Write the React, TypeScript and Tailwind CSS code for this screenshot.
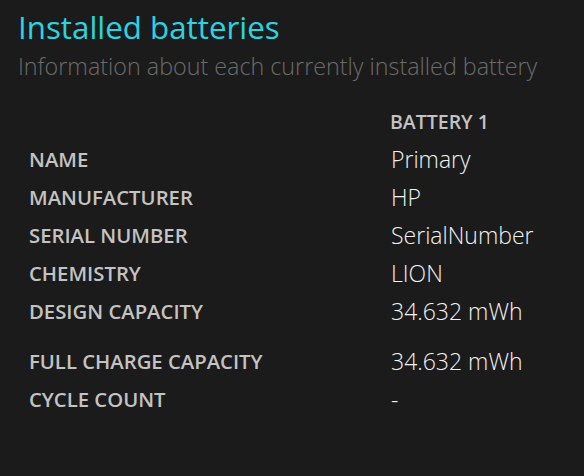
const rows: { label: string; value: string; gap?: boolean }[] = [
  { label: "NAME", value: "Primary" },
  { label: "MANUFACTURER", value: "HP" },
  { label: "SERIAL NUMBER", value: "SerialNumber" },
  { label: "CHEMISTRY", value: "LION" },
  { label: "DESIGN CAPACITY", value: "34.632 mWh" },
  { label: "FULL CHARGE CAPACITY", value: "34.632 mWh", gap: true },
  { label: "CYCLE COUNT", value: "-" },
];

export default function App() {
  return (
    <div
      className="w-[584px] h-[476px] bg-[#1b1b1b] overflow-hidden"
      style={{ fontFamily: '"Open Sans", "Noto Sans", sans-serif' }}
    >
      <div className="pl-[18px] pt-[7px]">
        <h1 className="text-[31.3px] leading-[40px] text-[#2ad4e0]">Installed batteries</h1>
        <p className="text-[23.3px] leading-[38px] font-light text-[#6b6b6b] whitespace-nowrap">
          Information about each currently installed battery
        </p>
      </div>

      <div className="pl-[29px] pt-[19px]">
        <div className="flex h-[36px] items-center">
          <div className="w-[361px]" />
          <div className="text-[19.5px] font-semibold text-[#c3c3c3]">BATTERY 1</div>
        </div>
        {rows.map((r) => (
          <div
            key={r.label}
            className={`flex h-[38px] items-center ${r.gap ? "mt-[12px]" : ""}`}
          >
            <div className="w-[362px] text-[20.3px] font-semibold text-[#c3c3c3] whitespace-nowrap">{r.label}</div>
            <div className="text-[23px] font-light text-[#f2f2f2]">{r.value}</div>
          </div>
        ))}
      </div>
    </div>
  );
}
